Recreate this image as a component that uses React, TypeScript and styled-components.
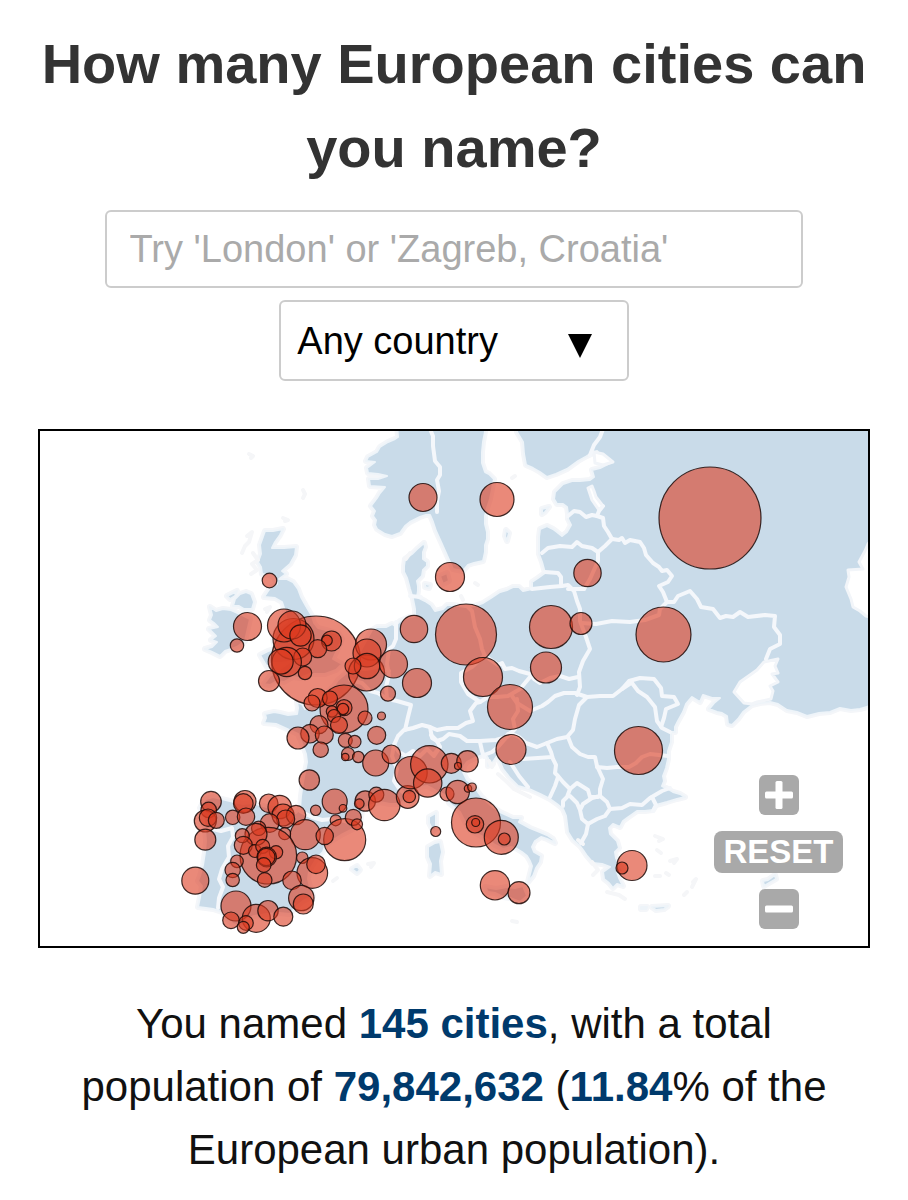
import React from "react";
import styled, { createGlobalStyle } from "styled-components";

const Global = createGlobalStyle`
  *, *::before, *::after { box-sizing: border-box; }
  body {
    margin: 0;
    background: #fff;
    color: #111;
    font-family: "Liberation Sans", Arial, Helvetica, sans-serif;
  }
`;

const Page = styled.main`
  display: flex;
  flex-direction: column;
  align-items: center;
  padding: 22px 38px 20px;
`;

const Title = styled.h1`
  margin: 0 0 20px;
  font-size: 56px;
  line-height: 84px;
  font-weight: 700;
  color: #333;
  text-align: center;
`;

const Form = styled.form`
  display: flex;
  flex-direction: column;
  align-items: center;
  gap: 12px;
  width: 100%;
  margin-bottom: 48px;
`;

const CityInput = styled.input`
  width: 84%;
  height: 78px;
  padding: 0 23px;
  border: 2px solid #ccc;
  border-radius: 6px;
  background: #fff;
  color: #111;
  font: 38px "Liberation Sans", Arial, sans-serif;
  outline: none;
  &::placeholder { color: #aaa; opacity: 1; }
`;

const SelectWrap = styled.div`
  display: flex;
  align-items: center;
  position: relative;
  width: 42%;
`;

const CountrySelect = styled.select`
  appearance: none;
  width: 100%;
  height: 81px;
  padding: 0 60px 0 16px;
  border: 2px solid #ccc;
  border-radius: 6px;
  background: #fff;
  color: #000;
  font: 38px "Liberation Sans", Arial, sans-serif;
`;

const Arrow = styled.svg`
  position: absolute;
  right: 37px;
  top: 34px;
  width: 24px;
  height: 24px;
  pointer-events: none;
`;

const MapFrame = styled.section`
  position: relative;
  width: 100%;
  border: 2px solid #000;
  overflow: hidden;
`;

const MapSvg = styled.svg`
  display: block;
  width: 100%;
  height: auto;
`;

const Controls = styled.div`
  position: absolute;
  right: 25px;
  bottom: 17px;
  display: flex;
  flex-direction: column;
  align-items: center;
  gap: 16px;
`;

const MapButton = styled.button<{ $wide?: boolean }>`
  display: flex;
  align-items: center;
  justify-content: center;
  width: ${(p) => (p.$wide ? 129 : 40)}px;
  height: ${(p) => (p.$wide ? 42 : 40)}px;
  padding: 0;
  border: 0;
  border-radius: ${(p) => (p.$wide ? 8 : 6)}px;
  background: rgba(153, 153, 153, 0.84);
  color: #fff;
  font: 700 33px "Liberation Sans", Arial, sans-serif;
  cursor: pointer;
`;

const Summary = styled.p`
  margin: 44px 0 0;
  max-width: 800px;
  font-size: 42px;
  line-height: 63px;
  text-align: center;
`;

const Figure = styled.strong`
  color: #003a6c;
`;

const LAND = [
  // Scandinavia
  "397,425 398,438 395,440 388,443 380,448 377,453 368,458 366,462 375,463 367,469 368,474 378,475 387,477 378,480 369,480 370,487 385,488 380,494 377,499 371,507 375,512 373,517 376,521 375,526 377,530 385,535 392,537 400,534 405,527 410,523 420,518 426,516 430,516 433,523 436,532 441,543 445,552 449,561 453,570 463,572 468,566 474,564 483,562 485,553 485,546 487,540 487,533 485,525 485,517 487,509 490,500 492,490 494,480 489,475 485,473 482,464 482,453 483,443 485,433 485,425",
  // Finland, Russia and the continent
  "517,425 517,433 523,443 524,455 526,466 533,469 540,473 547,478 556,475 567,470 578,462 587,457 597,452 602,458 612,463 600,469 592,471 594,478 590,481 580,482 572,482 563,485 555,493 554,500 557,505 563,505 567,508 568,515 568,520 571,526 567,533 562,537 557,533 553,530 547,527 540,530 539,538 539,547 539,555 542,563 545,574 538,579 532,583 532,590 523,592 519,588 513,588 507,591 500,593 491,599 483,604 474,607 465,608 453,606 447,606 443,610 435,612 431,606 425,602 417,598 418,592 418,587 417,582 422,577 423,571 427,567 427,563 423,560 423,553 425,548 424,544 417,550 412,555 405,560 404,567 404,573 407,579 410,590 413,600 415,610 415,617 409,618 400,622 395,627 392,625 386,628 377,628 372,631 367,640 360,653 352,668 344,676 338,681 334,687 326,694 323,701 314,705 305,710 302,705 297,703 298,709 297,715 288,716 280,714 274,713 265,715 266,719 264,724 276,725 287,730 298,735 303,747 306,755 307,763 305,773 303,783 301,797 300,810 296,814 290,815 277,811 263,807 252,804 243,805 230,802 213,798 206,800 203,803 200,809 202,813 204,821 205,830 206,842 205,853 203,866 200,877 198,882 202,887 200,898 198,908 206,909 213,910 222,913 227,920 233,925 243,928 247,920 254,917 267,915 279,914 290,915 297,907 303,902 313,897 310,888 308,880 309,873 312,867 317,859 323,853 325,847 330,843 341,836 353,830 360,825 362,812 367,808 380,803 390,805 400,805 410,796 420,788 427,787 433,790 440,794 447,797 449,804 460,813 465,823 470,831 479,836 487,840 495,846 503,850 511,848 517,850 522,853 527,857 530,862 532,867 530,875 528,883 533,877 536,869 540,863 541,857 534,853 532,848 535,842 541,838 547,840 555,844 553,840 547,836 540,833 530,829 519,823 521,819 513,819 500,813 493,808 487,803 481,797 478,793 474,786 467,781 463,773 464,767 467,763 475,759 485,755 488,759 488,767 493,763 497,757 500,763 503,770 510,779 518,787 529,790 540,795 550,800 557,805 563,810 566,817 568,833 573,841 580,847 583,851 587,857 593,864 602,865 610,868 603,873 604,880 609,884 613,889 617,885 623,887 619,879 617,873 624,873 620,867 616,859 615,853 619,849 617,842 610,835 609,829 613,825 620,828 623,822 627,819 637,812 645,812 653,811 656,806 667,803 677,800 685,798 680,795 673,793 668,790 662,787 664,782 663,777 666,769 668,760 668,752 671,743 671,733 675,733 675,728 678,722 683,713 686,705 692,698 700,703 703,696 712,699 720,699 714,704 709,710 717,713 722,714 727,717 728,725 732,726 738,720 743,713 752,706 760,704 770,703 778,705 787,711 797,713 807,717 819,714 830,713 840,709 851,711 860,710 867,708 880,700 880,425",
  // Great Britain
  "265,532 273,532 283,530 280,536 275,543 272,549 284,549 296,548 295,556 290,565 282,572 286,575 279,580 287,580 293,583 298,590 301,598 306,607 312,617 314,624 318,629 330,632 339,635 342,640 338,649 333,660 342,665 336,671 325,675 310,675 300,679 293,678 284,683 277,682 270,686 264,685 270,677 280,670 290,663 280,664 272,664 267,668 260,656 268,652 275,650 273,640 277,630 287,623 285,612 282,603 275,599 264,598 270,589 277,585 273,577 262,575 261,568 258,563 261,555 260,546",
  // Ireland
  "210,608 216,612 223,610 231,611 240,615 250,620 247,633 245,642 237,648 225,652 220,657 212,653 205,650 212,648 217,643 211,641 216,637 212,633 209,630 218,628 214,624 210,621 212,616",
  "246,593 251,595 254,603 252,610 244,610 239,607 233,607 235,600 240,595",
  "227,597 237,592 235,597 230,600",
  // Sardinia and Corsica
  "428,848 435,844 440,843 442,853 440,862 441,875 435,873 430,877 431,865 428,858",
  "429,818 436,814 436,830 433,832 429,824",
  // Sicily
  "485,888 496,890 507,888 515,889 523,887 527,897 520,903 510,899 503,898 495,894 488,893",
  // Baltic and Danish islands
  "506,531 509,534 507,542 505,537",
  "542,510 549,508 545,513 542,515",
  "440,577 447,574 449,582 443,585",
  "425,585 430,586 429,589 425,588",
  // Mediterranean islands
  "352,870 357,867 360,871 357,874",
  "641,908 647,908 646,910 641,910",
  "652,908 668,907 664,910 656,911",
  "763,882 768,881 775,876 776,880 769,884 764,887",
];

const WATER = [
  // Caspian shore
  "880,530 868,545 865,552 859,563 863,570 848,571 849,578 846,588 851,600 853,608 860,612 866,617 880,620",
  // Sea of Azov
  "734,693 740,683 750,676 757,671 764,663 778,660 775,667 778,674 772,675 778,683 770,687 773,692 771,700 762,702 757,703 752,705 744,704",
  // Lake Peipus
  "588,489 592,487 594,492 596,498 603,507 599,511 592,501",
  // Neva bay
  "594,453 603,455 613,463 603,466 595,464",
];

const FAINT = [
  "249,455 253,457 251,459",
  "303,491 305,495 303,499",
  "283,519 288,521 285,522",
  "247,537 252,533 249,543 245,547 242,554",
  "253,554 258,561 252,565 257,571 251,575",
  "265,610 270,608 267,613",
  "368,865 374,864 371,868",
  "333,882 337,879",
  "655,837 663,840 659,842",
  "657,851 661,854",
  "670,862 677,860 674,864",
  "655,877 660,877",
  "666,874 669,876",
  "692,888 696,880 693,883",
  "684,896 687,893",
  "512,922 517,923",
  "512,479 515,477",
  "475,584 478,586",
  "461,597 463,601",
  "489,762 492,768 494,765",
  "592,863 598,871 593,876",
  "607,893 619,896 625,900",
  "406,560 410,554",
  "583,845 578,841",
  "498,775 506,782 514,790 530,798",
];

const BORDERS = [
  "603,430 600,438 594,446 590,456",
  "430,430 433,437 433,447 435,462 440,468 440,476 437,481 439,492 437,502 437,513",
  "568,517 574,512 580,513 586,518 592,516 597,517",
  "603,507 599,512 597,517 603,519 604,527 608,533 612,540",
  "542,554 548,549 560,547 572,548 577,543 582,547 592,549 598,553",
  "612,540 605,547 598,553 598,562 590,580 584,590",
  "612,540 619,541 622,539 625,544 630,541 640,543 644,549 646,556 653,564 659,568 662,572 667,571 672,577 668,583 659,587 663,593 667,603",
  "667,603 674,603 678,597 690,592 697,600 701,608 713,610 720,619 726,617 733,618 740,613 748,618 765,616 775,617 774,628 780,636 780,645 770,650 766,660",
  "582,624 596,625 612,622 630,623 645,621 659,616 660,610 667,603",
  "545,573 558,574 561,578 561,585",
  "532,590 550,588 562,587 568,586 574,592 577,602 580,610 580,622 586,638 590,650 583,662 579,673 580,688 577,696",
  "568,590 584,590",
  "466,606 472,612 475,628 480,640 482,650 485,657",
  "488,659 498,666 502,664 505,670 512,669 519,672 530,675 534,680 540,684 550,679 560,677 569,680 578,678",
  "484,657 472,668 461,674 461,683 468,695 480,703",
  "480,703 488,698 497,698 508,697 520,690 530,678",
  "512,697 517,704 530,712 542,707 548,703 555,697 564,694 575,694 587,698 600,697 613,697 622,690 631,684",
  "587,698 579,706 575,720 573,731 567,738 557,740 547,744 537,748 526,744 519,738 510,734",
  "517,700 518,712 513,720 515,730 507,738 496,741 480,742 467,742 460,737 449,735 443,740 437,742 431,736",
  "480,703 476,704 470,712 473,722 466,724 458,729 447,729 437,731 430,728 422,726 413,729 404,731 398,737 394,746",
  "430,728 432,739 437,742 440,748 434,755",
  "394,746 399,753 406,757 413,752 420,757 427,750 434,757 440,748",
  "394,746 392,757 397,770 394,782 400,791 408,797",
  "405,731 408,718 411,706 397,702 387,700 378,694 370,692 362,684 350,681",
  "387,700 386,688 389,676 387,665 389,650 393,647 396,640 396,623",
  "389,672 378,668 365,670 352,668",
  "410,597 421,598",
  "480,743 482,752 484,758",
  "484,756 492,753 498,748 505,740 508,735",
  "300,812 312,818 322,821 332,820 345,822 358,826",
  "205,832 213,830 221,832 232,829 233,838 228,847 229,858 222,870 219,880 223,888 219,899 218,909",
  "510,763 519,777 528,788",
  "523,760 538,759 552,758",
  "547,744 551,753 553,760 556,766 555,774 558,777 563,783 570,790 577,784 588,791 590,798 598,798",
  "558,778 555,787 550,798",
  "570,790 567,798 563,802 563,807",
  "570,797 577,804 580,811 583,805 592,799 600,797 607,803 610,810 605,817 597,820 588,825 582,820 580,811",
  "568,738 572,748 580,755 588,758 595,758 597,767 603,780 600,790 600,797",
  "597,768 607,769 617,768 629,768 636,764 642,758 650,755 668,757",
  "610,810 622,809 630,805 642,806 650,799 662,792 670,789",
  "652,798 656,806 653,812",
  "588,825 586,835 581,844",
  "632,684 638,692 647,698 655,708 657,722 662,729 670,733",
  "622,690 629,682 640,679 654,680 661,689 662,697 674,698 678,705 666,710 664,719 661,728",
];

const CITIES: [number, number, number][] = [
  [710, 519, 51], [423, 498.5, 14], [497, 500.5, 17], [450, 578, 14.5], [587.5, 574, 13.7],
  [269.5, 581.5, 7.3], [247.5, 627.5, 14], [237, 646.5, 6.7], [466, 635.5, 30.5], [414, 630, 13.7],
  [551, 628, 21.5], [581, 624.5, 11], [546, 668.5, 15.5], [663.5, 635.5, 27.5], [483, 678, 19.5],
  [417, 684, 14.5], [510, 708, 22.5], [511, 750.5, 15], [638.5, 751.5, 24], [632, 866.5, 15], [622, 869, 6],
  [316, 661.5, 44.5], [293.5, 640, 20.5], [284, 626.5, 16.5], [292, 626, 14], [300.5, 636.5, 10.7],
  [331.5, 642, 10], [327, 641.5, 5.3], [317.7, 649.7, 9], [302.7, 658, 9], [286.7, 663, 14.7],
  [280.7, 662.7, 12.5], [305, 674, 6.7], [269, 682, 10.5],
  [371, 645.5, 15.5], [366.5, 674, 18], [367, 654, 14], [367, 667, 12.7], [353, 667, 8], [393.5, 665, 14], [388, 694.7, 7.5],
  [344, 710, 24], [317.7, 699, 9.5], [312, 704, 8], [330, 699.5, 7.5], [344, 708.7, 8], [343, 710, 5.7],
  [332, 712.5, 5.7], [334, 717, 6.5], [339, 726, 8.5], [365, 719, 7], [381.5, 717, 4],
  [319, 725.7, 9], [310, 734.7, 9.3], [298, 739, 11], [324.3, 736, 9], [320.7, 750.7, 7.7],
  [345.3, 741.3, 7], [354.7, 742.7, 6.3], [376.7, 736.3, 9], [348, 755, 6.5], [345.3, 758, 3.7],
  [358.3, 758, 5.7], [375.7, 764, 13], [391.3, 755.3, 9.3],
  [309.3, 781, 10.2], [334.7, 802.5, 12.5], [343, 809.3, 3.8], [315.7, 811.3, 5.2], [335.7, 821.3, 5.5],
  [344.7, 840.7, 21], [353.3, 818.3, 8], [357, 825.3, 5.5], [365.3, 802, 10.2], [359.3, 804.7, 4.8],
  [376.3, 795.7, 7.5], [384.3, 806, 15.7], [407.7, 798, 11.3], [409.3, 797.5, 6.2],
  [411, 773.7, 16.2], [429.3, 765.3, 18.7], [427.7, 784, 14.2], [451.3, 764.3, 10], [467.5, 762.3, 10.7],
  [458, 767, 3.5], [447, 795, 7], [457.7, 793, 11.7], [468, 789.5, 3.7], [472, 788.3, 4.3], [435.7, 832.5, 5],
  [476, 823.5, 24.5], [475, 825.3, 8.7], [475.7, 823.5, 4], [501.3, 838.3, 17], [504.3, 840, 6],
  [495, 886.3, 14.7], [519, 893.7, 11],
  [195.3, 881.7, 13.5], [211, 802.7, 10.3], [208.7, 811, 7.8], [205.3, 822, 11], [208, 818.7, 8.7],
  [216.3, 821.3, 8], [205.3, 840.7, 10.5], [245, 802.5, 11], [243.3, 804.5, 9.8], [232.7, 818.3, 7.2],
  [246, 817.7, 8.7], [268.7, 804.3, 9.3], [279.7, 808, 11.7], [283, 816, 11], [296, 816, 9.7],
  [285.7, 820, 9], [269.7, 824, 9.3], [284.7, 834.7, 6], [305.3, 835.7, 15], [324.7, 837, 8.7],
  [268.3, 856.7, 28.3], [258.7, 829.3, 7.2], [256, 835.3, 11], [242.3, 836.7, 7], [243.3, 846.3, 9],
  [255, 852, 6.5], [262.7, 847.3, 7], [276, 853.3, 6.7], [266.7, 858, 9.8], [266.3, 858, 8.7],
  [263.7, 866, 7.3], [264.7, 881, 7.3], [237, 862.3, 6.3], [232.7, 871, 7.7], [232.7, 881, 6.7],
  [302.3, 858.7, 5.7], [312.3, 874, 15.3], [316, 865.3, 9.3], [292, 881.3, 9.3], [301.3, 899, 12.7],
  [303.3, 905, 10], [236, 907, 15], [231, 921.3, 8.3], [256.3, 919.3, 14], [268, 911.7, 10.2],
  [283.3, 917.7, 9.5], [246, 924, 7.3], [243.3, 928.3, 6],
];

function EuropeMap() {
  return (
    <MapSvg viewBox="40 432 828 515" role="img" aria-label="Map of named European cities">
      <g stroke="#f4f6f9" strokeWidth="6" strokeLinejoin="round" fill="#f4f6f9">
        {LAND.map((p, i) => <polygon key={i} points={p} />)}
      </g>
      <g fill="#c9dbe9" stroke="#eef4f9" strokeWidth="2" strokeLinejoin="round">
        {LAND.map((p, i) => <polygon key={i} points={p} />)}
      </g>
      <g fill="#fff" stroke="#f2f5f9" strokeWidth="3" strokeLinejoin="round">
        {WATER.map((p, i) => <polygon key={i} points={p} />)}
      </g>
      <g fill="none" stroke="#f5f6f8" strokeWidth="4" strokeLinejoin="round" strokeLinecap="round">
        {FAINT.map((p, i) => <polyline key={i} points={p} />)}
      </g>
      <g fill="none" stroke="#f4f7fb" strokeWidth="4" strokeLinejoin="round" strokeLinecap="round">
        {BORDERS.map((p, i) => <polyline key={i} points={p} />)}
      </g>
      <g fill="#dc3a20" fillOpacity="0.6" stroke="#1c0b08" strokeOpacity="0.85" strokeWidth="1.2">
        {CITIES.map(([x, y, r], i) => <circle key={i} cx={x} cy={y} r={r} />)}
      </g>
    </MapSvg>
  );
}

export default function App() {
  return (
    <>
      <Global />
      <Page>
        <Title>How many European cities can you name?</Title>
        <Form onSubmit={(e) => e.preventDefault()}>
          <CityInput type="text" aria-label="City name" placeholder="Try 'London' or 'Zagreb, Croatia'" />
          <SelectWrap>
            <CountrySelect aria-label="Country" defaultValue="any">
              <option value="any">Any country</option>
            </CountrySelect>
            <Arrow viewBox="0 0 24 24" aria-hidden="true">
              <path d="M0 0h24L12 24z" />
            </Arrow>
          </SelectWrap>
        </Form>
        <MapFrame>
          <EuropeMap />
          <Controls>
            <MapButton type="button" aria-label="Zoom in">
              <svg width="28" height="28" viewBox="0 0 28 28" fill="#fff" aria-hidden="true">
                <rect x="0" y="10.5" width="28" height="7" rx="1.5" />
                <rect x="10.5" y="0" width="7" height="28" rx="1.5" />
              </svg>
            </MapButton>
            <MapButton type="button" $wide>RESET</MapButton>
            <MapButton type="button" aria-label="Zoom out">
              <svg width="28" height="28" viewBox="0 0 28 28" fill="#fff" aria-hidden="true">
                <rect x="0" y="10.5" width="28" height="7" rx="1.5" />
              </svg>
            </MapButton>
          </Controls>
        </MapFrame>
        <Summary>
          You named <Figure>145 cities</Figure>, with a total population of{" "}
          <Figure>79,842,632</Figure> (<Figure>11.84</Figure>% of the European urban population).
        </Summary>
      </Page>
    </>
  );
}
